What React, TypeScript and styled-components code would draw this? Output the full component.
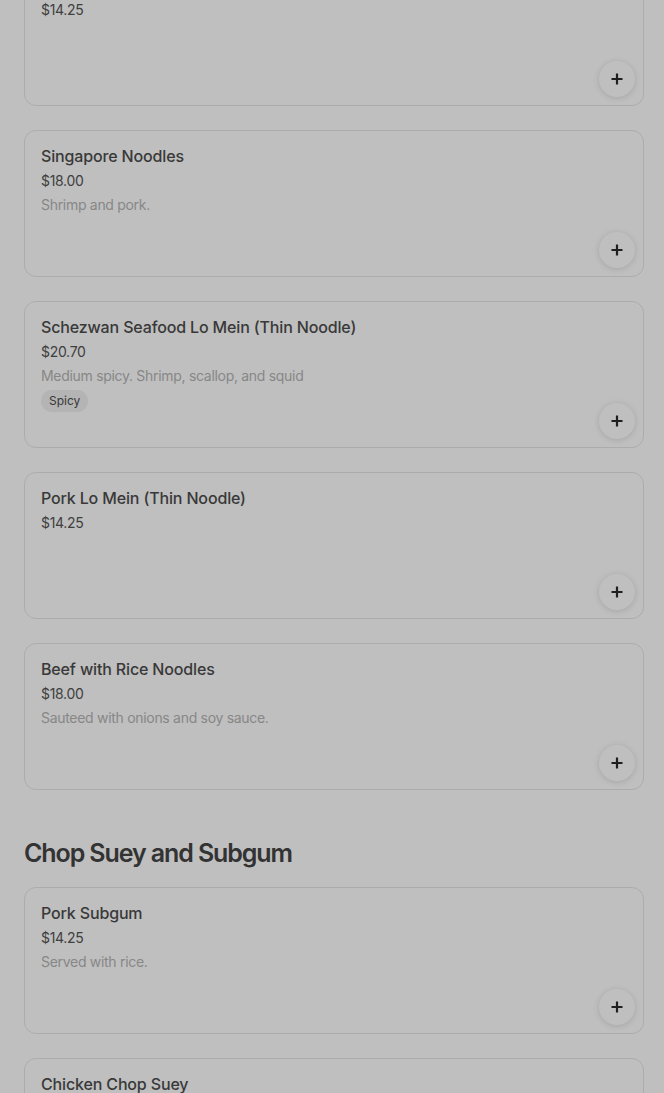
import styled, { createGlobalStyle } from 'styled-components';

const GlobalStyle = createGlobalStyle`
    html, body {
        margin: 0;
        padding: 0;
        background: #ffffff;
        font-family: Inter, "Noto Sans", sans-serif;
        overflow: hidden;
    }
`;

const Page = styled.main`
    display: flex;
    flex-direction: column;
    padding: 0 20px 0 24px;
    margin-top: -41px;
`;

const Section = styled.section`
    display: flex;
    flex-direction: column;
`;

const SectionTitle = styled.h2`
    margin: 47px 0 18px;
    font-size: 25px;
    line-height: 32px;
    font-weight: 600;
    letter-spacing: -1.1px;
    color: #444444;
`;

const List = styled.div`
    display: flex;
    flex-direction: column;
    gap: 24px;
`;

const Card = styled.article`
    position: relative;
    box-sizing: border-box;
    min-height: 147px;
    padding: 15px 16px 16px;
    border: 1px solid #e6e6e6;
    border-radius: 12px;
    background: #ffffff;
    display: flex;
    flex-direction: column;
    gap: 4px;
`;

const Name = styled.h3`
    margin: 0;
    font-size: 16px;
    line-height: 21px;
    font-weight: 500;
    letter-spacing: -0.15px;
    color: #4d4d4d;
`;

const Price = styled.div`
    font-size: 14px;
    line-height: 20px;
    letter-spacing: -0.3px;
    color: #555555;
`;

const Description = styled.p`
    margin: 0;
    font-size: 14px;
    line-height: 20px;
    letter-spacing: -0.3px;
    color: #b5b5b5;
`;

const Tag = styled.span`
    align-self: flex-start;
    padding: 2px 8px;
    border-radius: 999px;
    background: #f0f0f0;
    font-size: 12px;
    line-height: 18px;
    color: #4d4d4d;
`;

const AddButton = styled.button`
    position: absolute;
    right: 8px;
    bottom: 8px;
    width: 36px;
    height: 36px;
    border: none;
    border-radius: 50%;
    background: #ffffff;
    box-shadow: 0 1px 6px rgba(0, 0, 0, 0.14);
    display: flex;
    align-items: center;
    justify-content: center;
    padding: 0;
    cursor: pointer;
`;

const Backdrop = styled.div`
    position: fixed;
    inset: 0;
    background: rgba(0, 0, 0, 0.25);
`;

type Item = {
    name: string;
    price: string;
    description?: string;
    tags?: string[];
};

const sections: { title?: string; items: Item[] }[] = [
    {
        items: [
            { name: 'Chicken Lo Mein (Thin Noodle)', price: '$14.25' },
            { name: 'Singapore Noodles', price: '$18.00', description: 'Shrimp and pork.' },
            {
                name: 'Schezwan Seafood Lo Mein (Thin Noodle)',
                price: '$20.70',
                description: 'Medium spicy. Shrimp, scallop, and squid',
                tags: ['Spicy']
            },
            { name: 'Pork Lo Mein (Thin Noodle)', price: '$14.25' },
            { name: 'Beef with Rice Noodles', price: '$18.00', description: 'Sauteed with onions and soy sauce.' }
        ]
    },
    {
        title: 'Chop Suey and Subgum',
        items: [
            { name: 'Pork Subgum', price: '$14.25', description: 'Served with rice.' },
            { name: 'Chicken Chop Suey', price: '$14.25', description: 'Served with rice.' }
        ]
    }
];

function PlusIcon() {
    return (
        <svg width="12" height="12" viewBox="0 0 12 12" fill="none">
            <path d="M6 0.5v11M0.5 6h11" stroke="#2a2a2a" strokeWidth="2.2" />
        </svg>
    );
}

function App() {
    return (
        <>
            <GlobalStyle />
            <Page>
                {sections.map((section, i) => (
                    <Section key={i}>
                        {section.title && <SectionTitle>{section.title}</SectionTitle>}
                        <List>
                            {section.items.map((item) => (
                                <Card key={item.name}>
                                    <Name>{item.name}</Name>
                                    <Price>{item.price}</Price>
                                    {item.description && <Description>{item.description}</Description>}
                                    {item.tags && item.tags.map((tag) => <Tag key={tag}>{tag}</Tag>)}
                                    <AddButton aria-label={`Add ${item.name}`}>
                                        <PlusIcon />
                                    </AddButton>
                                </Card>
                            ))}
                        </List>
                    </Section>
                ))}
            </Page>
            <Backdrop />
        </>
    );
}

export default App;
